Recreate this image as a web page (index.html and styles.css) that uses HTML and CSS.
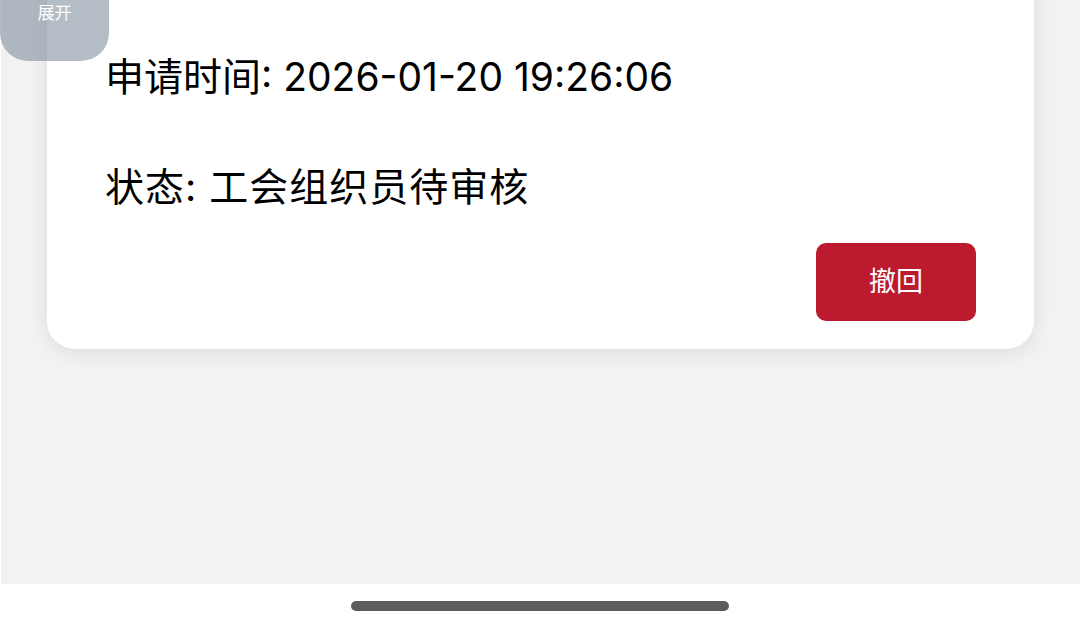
FILE: index.html
```html
<!DOCTYPE html>
<html lang="zh">
<head>
<meta charset="utf-8">
<link rel="stylesheet" href="styles.css">
</head>
<body>
<div class="screen">
  <div class="content">
    <div class="card">
      <div class="row">申请时间: 2026-01-20 19:26:06</div>
      <div class="row row-status">状态: 工会组织员待审核</div>
      <div class="actions">
        <button class="btn">撤回</button>
      </div>
    </div>
  </div>
  <div class="tab">展开</div>
  <div class="navbar"><div class="indicator"></div></div>
</div>
</body>
</html>
```
FILE: styles.css
```css
* { box-sizing: border-box; }
html, body {
  margin: 0;
  padding: 0;
  background: #ffffff;
  font-family: "Noto Sans CJK SC", "Noto Sans", sans-serif;
}
.screen {
  position: relative;
  width: 1080px;
  height: 629px;
  overflow: hidden;
  display: flex;
  flex-direction: column;
}
.content {
  height: 584px;
  margin-left: 1px;
  background: #f1f2f1;
  padding: 0 46px 0 46px;
  overflow: hidden;
}
.card {
  margin-top: -60px;
  background: #ffffff;
  border-radius: 28px;
  box-shadow: 0 4px 20px rgba(0, 0, 0, 0.09);
  padding: 82px 58px 28px 60px;
}
.row {
  font-family: "Inter", "Noto Sans CJK SC", sans-serif;
  font-size: 39px;
  line-height: 110px;
  height: 110px;
  color: #000000;
  white-space: nowrap;
  margin-left: -2px;
}
.row-status {
  letter-spacing: 1px;
}
.actions {
  display: flex;
  justify-content: flex-end;
  margin-top: 1px;
}
.btn {
  width: 160px;
  height: 78px;
  border: none;
  border-radius: 10px;
  background: #bc1a2e;
  color: #ffffff;
  font-family: "Noto Sans CJK SC", sans-serif;
  font-size: 27px;
  padding: 0 0 5px 0;
}
.tab {
  position: absolute;
  left: 0;
  top: -20px;
  width: 109px;
  height: 81px;
  border-radius: 0 0 28px 28px;
  background: rgba(123, 137, 155, 0.57);
  color: #ffffff;
  font-size: 17px;
  text-align: center;
  padding-top: 20px;
  line-height: 24px;
}
.navbar {
  flex: 1;
  background: #ffffff;
  display: flex;
  justify-content: center;
  padding-top: 17px;
}
.indicator {
  width: 378px;
  height: 10px;
  border-radius: 5px;
  background: #5c5c5c;
}
```
